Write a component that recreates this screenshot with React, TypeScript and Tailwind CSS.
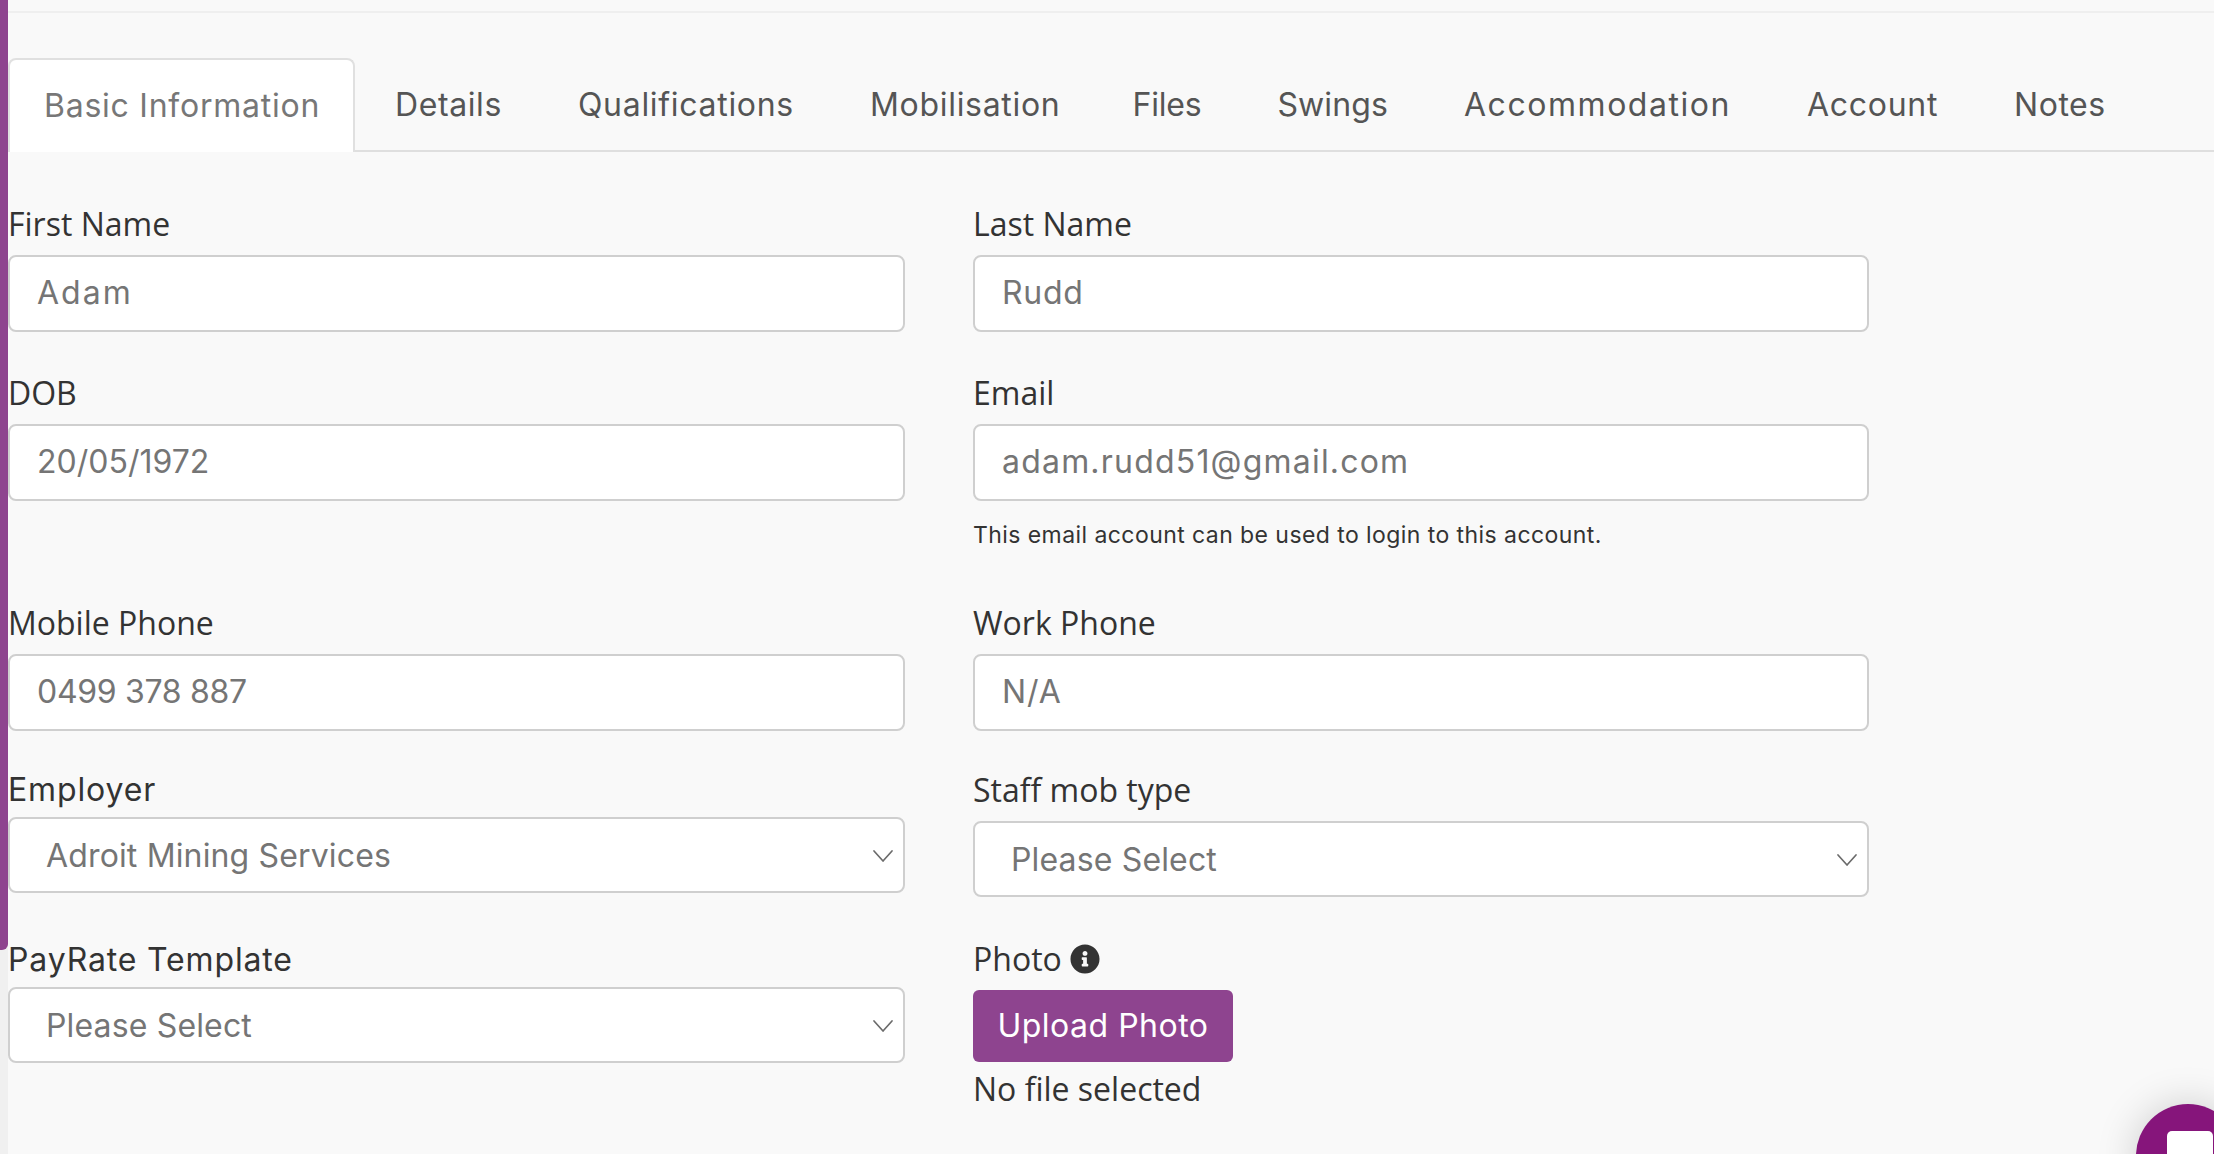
import React from "react";
import { FaInfoCircle } from "react-icons/fa";

const poppins = "font-['Inter','Liberation_Sans',sans-serif]";
const label = "block text-[32px] leading-[44px] text-[#333] font-['Open_Sans',sans-serif]";
const labelPop = `block text-[32px] leading-[44px] text-[#333] ${poppins}`;
const fieldBox = `block w-full bg-white border-2 border-[#cfcfcf] rounded-[8px] text-[32px] text-[#757575] ${poppins}`;

function Field({ name, value, track = "", className = "" }: { name: string; value: string; track?: string; className?: string }) {
  return (
    <div className={className}>
      <label className={label}>{name}</label>
      <input readOnly placeholder={value} className={`${fieldBox} ${track} h-[77px] mt-[9px] px-[27px] pb-[2px] placeholder:text-[#757575] outline-none`} />
    </div>
  );
}

function Select({ name, value, pop = false, className = "" }: { name: string; value: string; pop?: boolean; className?: string }) {
  return (
    <div className={className}>
      <label className={pop ? `${labelPop} tracking-[0.85px]` : label}>{name}</label>
      <div className={`${fieldBox} h-[76px] ${pop ? "mt-[5px]" : "mt-[9px]"} px-[36px] pt-[1px] flex items-center justify-between relative tracking-[0.15px]`}>
        <span>{value}</span>
        <svg viewBox="0 0 22 14" className="absolute right-[9px] top-[30px] w-[22px] h-[14px]" fill="none" stroke="#6b6b6b" strokeWidth="1.7" strokeLinecap="round" strokeLinejoin="round">
          <path d="M2 2l9 10 9-10" />
        </svg>
      </div>
    </div>
  );
}

const tabs = [
  { t: "Details", c: "pl-[38px] pr-[38px] tracking-[0.6px]" },
  { t: "Qualifications", c: "pl-[38px] pr-[38px] tracking-[0.7px]" },
  { t: "Mobilisation", c: "pl-[38px] pr-[34px] tracking-[0.7px]" },
  { t: "Files", c: "pl-[38px] pr-[38px] tracking-[-0.2px]" },
  { t: "Swings", c: "pl-[38px] pr-[38px] tracking-[0.1px]" },
  { t: "Accommodation", c: "pl-[38px] pr-[38px] tracking-[1.55px]" },
  { t: "Account", c: "pl-[38px] pr-[38px] tracking-[0.7px]" },
  { t: "Notes", c: "pl-[38px] pr-[38px] tracking-[0.5px]" },
];

export default function App() {
  return (
    <div className="relative w-[2214px] h-[1154px] overflow-hidden flex bg-[#f9f9f9]">
      <div className="w-[8px] h-full bg-[#f0f0f0] shrink-0">
        <div className="w-[8px] h-[950px] bg-[#8e448f] rounded-br-[6px]" />
      </div>
      <div className="flex-1 min-w-0">
        <div className="h-[13px] border-b-2 border-[#efefef]" />
        <div className={`mt-[45px] h-[94px] flex border-b-2 border-[#dfdfdf] text-[32px] text-[#555] ${poppins}`}>
          <div className="h-[94px] w-[347px] shrink-0 bg-white border-2 border-b-0 border-[#e0e0e0] rounded-t-[8px] pl-[34px] leading-[91px] tracking-[0.75px] text-[#777]">Basic Information</div>
          <div className="flex ml-[2px]">
            {tabs.map(({ t, c }) => (
              <div key={t} className={`leading-[94px] ${c}`}>{t}</div>
            ))}
          </div>
        </div>
        <div className="flex gap-[68px] w-[1861px] mt-[50px]">
          <div className="w-[897px] flex flex-col">
            <Field name="First Name" value="Adam" track="tracking-[2px]" />
            <Field name="DOB" value="20/05/1972" className="mt-[39px]" />
            <Field name="Mobile Phone" value="0499 378 887" track="tracking-[-0.3px]" className="mt-[100px]" />
            <Select name="Employer" value="Adroit Mining Services" pop className="mt-[37px]" />
            <Select name="PayRate Template" value="Please Select" pop className="mt-[45px]" />
          </div>
          <div className="w-[896px] flex flex-col">
            <Field name="Last Name" value="Rudd" track="tracking-[0.7px]" />
            <Field name="Email" value="adam.rudd51@gmail.com" track="tracking-[1.2px]" className="mt-[39px]" />
            <p className={`mt-[19px] text-[23px] tracking-[0.43px] leading-[30px] text-[#333] ${poppins}`}>This email account can be used to login to this account.</p>
            <Field name="Work Phone" value="N/A" track="tracking-[1px]" className="mt-[51px]" />
            <Select name="Staff mob type" value="Please Select" className="mt-[37px]" />
            <div className="mt-[40px]">
              <div className={`${label} flex items-center gap-[8px]`}>
                Photo <FaInfoCircle className="w-[30px] h-[30px] text-[#333]" />
              </div>
              <button className={`block mt-[9px] w-[260px] h-[72px] rounded-[6px] bg-[#8e448f] text-white text-[32px] tracking-[0.5px] ${poppins}`}>Upload Photo</button>
              <div className={`${label} mt-[5px]`}>No file selected</div>
            </div>
          </div>
        </div>
      </div>
      <div className="absolute left-[2136px] top-[1104px] w-[104px] h-[104px] rounded-full bg-[#86157b] shadow-[0_0_40px_rgba(0,0,0,0.18)]">
        <div className="absolute left-[31px] top-[27px] w-[46px] h-[40px] bg-white rounded-[5px]" />
      </div>
    </div>
  );
}
